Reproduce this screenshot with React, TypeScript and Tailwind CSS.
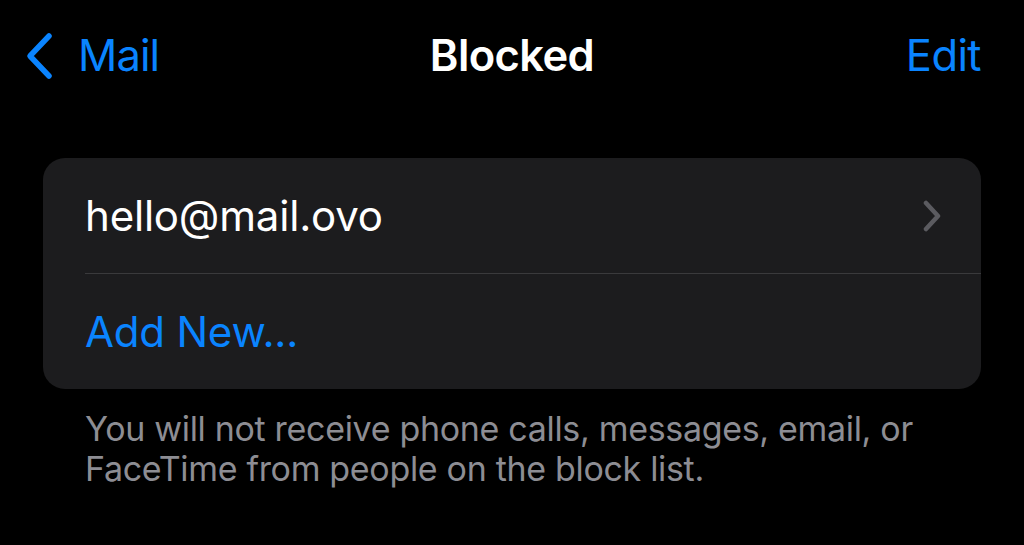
export default function App() {
  return (
    <div
      className="w-[1024px] h-[545px] bg-black overflow-hidden"
      style={{ fontFamily: "Inter, 'Noto Sans', sans-serif" }}
    >
      {/* Nav bar */}
      <div className="relative h-[110px] flex items-center justify-between px-[25px] pt-[2px]">
        <div className="flex items-center gap-[25px] text-[#0a84ff]">
          <svg width="28" height="48" viewBox="0 0 28 48" fill="none">
            <path d="M24 4 L5 24 L24 44" stroke="#0a84ff" strokeWidth="5.5" strokeLinecap="round" strokeLinejoin="round" />
          </svg>
          <span className="text-[43.5px] leading-none tracking-[-0.9px]">Mail</span>
        </div>
        <div className="absolute left-0 right-0 text-center text-white text-[43.5px] font-semibold leading-none tracking-[-0.6px] pointer-events-none">
          Blocked
        </div>
        <span className="text-[#0a84ff] text-[43.5px] leading-none tracking-[-0.6px] pr-[18px]">Edit</span>
      </div>

      {/* Card */}
      <div className="mx-[43px] mt-[48px] rounded-[22px] bg-[#1c1c1e]">
        <div className="flex items-center justify-between h-[115px] pl-[42px] pr-[40px]">
          <span className="text-white text-[42px] tracking-[-0.2px]">hello@mail.ovo</span>
          <svg width="18" height="32" viewBox="0 0 18 32" fill="none">
            <path d="M3 3 L15 16 L3 29" stroke="#5b5b60" strokeWidth="4.5" strokeLinecap="round" strokeLinejoin="round" />
          </svg>
        </div>
        <div className="ml-[42px] h-px bg-[#3a3a3c]" />
        <div className="flex items-center h-[115px] pl-[42px]">
          <span className="text-[#0a84ff] text-[42px] tracking-[-0.2px]">Add New...</span>
        </div>
      </div>

      {/* Footer */}
      <p className="ml-[85px] mt-[20px] text-[#8d8d93] text-[34px] leading-[40px] tracking-[-0.32px] whitespace-nowrap">
        You will not receive phone calls, messages, email, or
        <br />
        FaceTime from people on the block list.
      </p>
    </div>
  );
}
